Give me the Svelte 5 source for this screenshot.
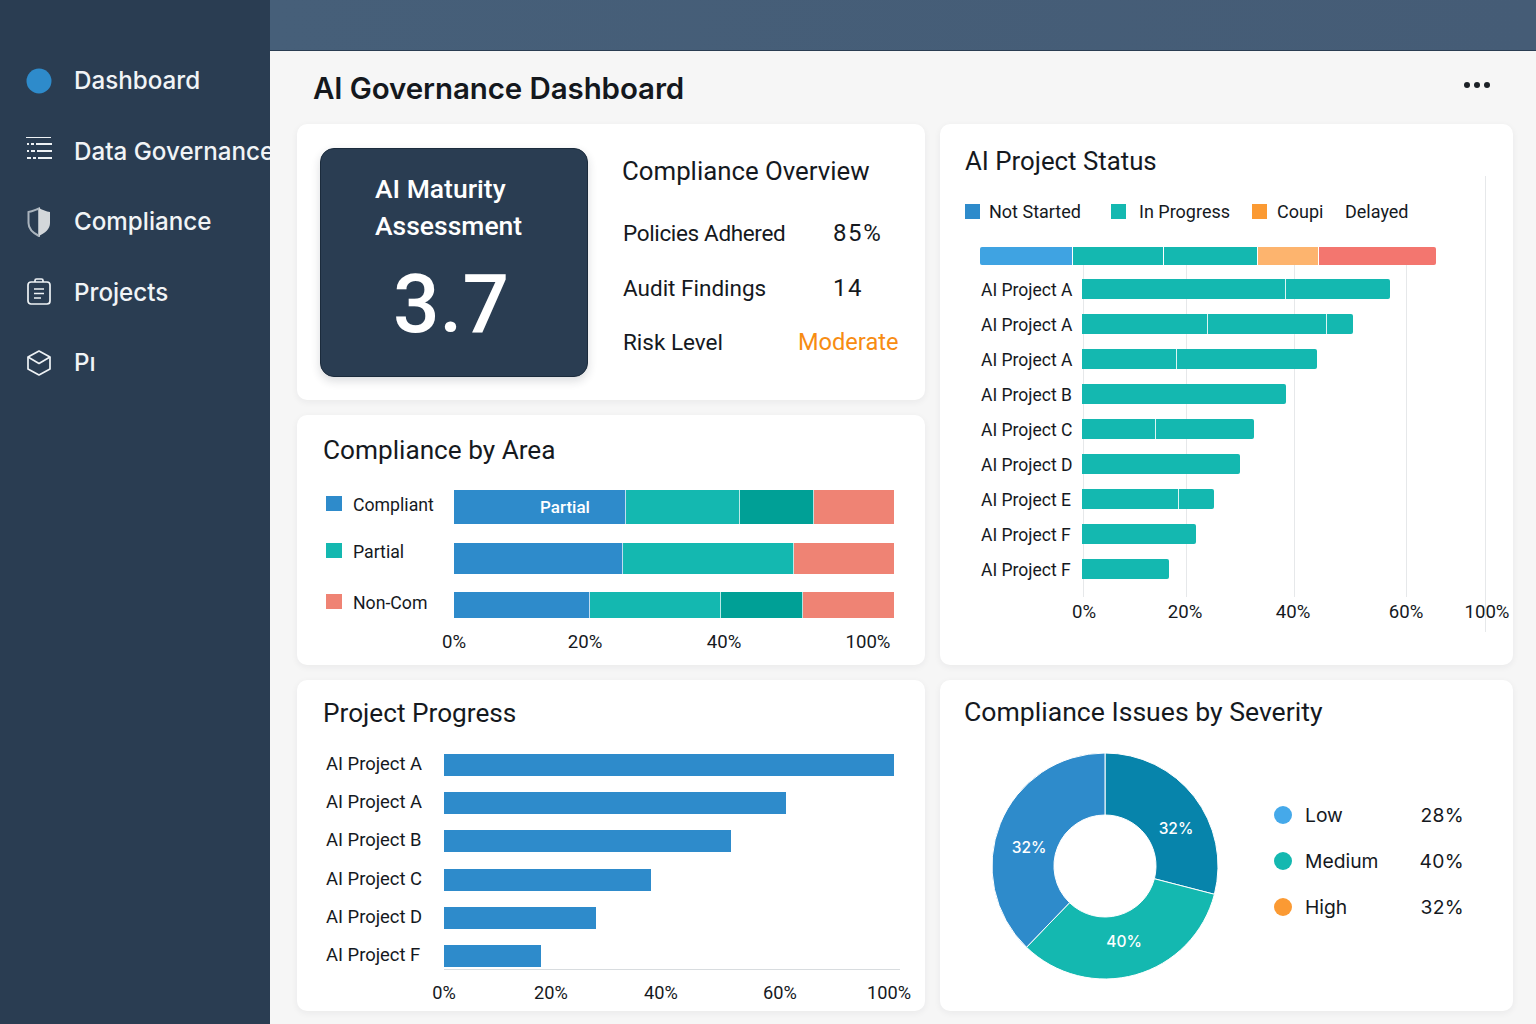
<script>
  const nav = ['Dashboard', 'Data Governance', 'Compliance', 'Projects'];

  const overview = [
    { label: 'Policies Adhered', value: '85%', tight: -0.35 },
    { label: 'Audit Findings', value: '14', tight: 0 }
  ];

  const areaLegend = [
    { name: 'Compliant', color: '#2e8bcb', h: 47 },
    { name: 'Partial', color: '#14b8b0', h: 51 },
    { name: 'Non-Com', color: '#ef8374', h: 25 }
  ];

  // widths in px, bar is 440 wide
  const areaBars = [
    { h: 34, gap: 0, segs: [[172, '#2e8bcb', 'Partial'], [114, '#14b8b0'], [74, '#00a096'], [80, '#ef8374']] },
    { h: 31, gap: 19, segs: [[169, '#2e8bcb'], [171, '#14b8b0'], [100, '#ef8374']] },
    { h: 26, gap: 18, segs: [[136, '#2e8bcb'], [131, '#14b8b0'], [82, '#00a096'], [91, '#ef8374']] }
  ];
  const areaTicks = [['0%', 0], ['20%', 131], ['40%', 270], ['100%', 414]];

  const statusLegend = [
    { name: 'Not Started', color: '#2e8bcb', gap: 9, w: 122 },
    { name: 'In Progress', color: '#14b8b0', gap: 13, w: 113 },
    { name: 'Coupi', color: '#fb9a33', gap: 10, w: 68 },
    { name: 'Delayed' }
  ];
  const statusTop = [[93, '#3fa3e2'], [91, '#14b8b0'], [94, '#14b8b0'], [61, '#fdb46e'], [117, '#f3766f']];
  const statusRows = [
    { name: 'AI Project A', end: 308, splits: [203] },
    { name: 'AI Project A', end: 271, splits: [125, 244] },
    { name: 'AI Project A', end: 235, splits: [94] },
    { name: 'AI Project B', end: 204, splits: [] },
    { name: 'AI Project C', end: 172, splits: [73] },
    { name: 'AI Project D', end: 158, splits: [] },
    { name: 'AI Project E', end: 132, splits: [96] },
    { name: 'AI Project F', end: 114, splits: [] },
    { name: 'AI Project F', end: 87, splits: [] }
  ];
  const statusGrid = [
    { x: 143, top: 141, h: 332 },
    { x: 246, top: 141, h: 332 },
    { x: 354, top: 141, h: 332 },
    { x: 466, top: 141, h: 332 },
    { x: 545, top: 52, h: 456 }
  ];
  const statusTicks = [['0%', 2], ['20%', 103], ['40%', 211], ['60%', 324], ['100%', 405]];

  const progress = [
    { name: 'AI Project A', w: 450 },
    { name: 'AI Project A', w: 342 },
    { name: 'AI Project B', w: 287 },
    { name: 'AI Project C', w: 207 },
    { name: 'AI Project D', w: 152 },
    { name: 'AI Project F', w: 97 }
  ];
  const progressTicks = [['0%', 0], ['20%', 107], ['40%', 217], ['60%', 336], ['100%', 445]];

  const severity = [
    { name: 'Low', pct: '28%', color: '#45a9ea' },
    { name: 'Medium', pct: '40%', color: '#14b8b0' },
    { name: 'High', pct: '32%', color: '#fb9a33' }
  ];

  function slice(a0, a1, R = 113, r = 51) {
    const p = (rad, a) => {
      const t = (a * Math.PI) / 180;
      return `${(rad * Math.sin(t)).toFixed(2)} ${(-rad * Math.cos(t)).toFixed(2)}`;
    };
    const large = a1 - a0 > 180 ? 1 : 0;
    return `M${p(R, a0)}A${R} ${R} 0 ${large} 1 ${p(R, a1)}L${p(r, a1)}A${r} ${r} 0 ${large} 0 ${p(r, a0)}Z`;
  }
  const donut = [
    { d: slice(0, 104.5), color: '#0784ab', label: '32%', x: 71, y: -38 },
    { d: slice(104.5, 224), color: '#14b8b0', label: '40%', x: 19, y: 75 },
    { d: slice(224, 360), color: '#2e8bcb', label: '32%', x: -76, y: -19 }
  ];
</script>

<div class="page">
  <aside class="sidebar">
    {#each nav as item, i}
      <div class="nav-item">
        <span class="nav-icon">
          {#if i === 0}
            <svg width="28" height="28" viewBox="0 0 28 28"><circle cx="14" cy="14" r="12.5" fill="#2e8bcb" /></svg>
          {:else if i === 1}
            <svg width="28" height="28" viewBox="0 0 28 28" fill="none" stroke="#eef2f5">
              <path d="M1 0.5h25" stroke-width="1" />
              <path d="M2 7h2M6 7h3M11 7h16M2 14h2M6 14h4M12 14h15M2 21h4M8 21h3M13 21h14" stroke-width="2" />
            </svg>
          {:else if i === 2}
            <svg width="28" height="30" viewBox="0 0 28 30">
              <path d="M14 1.5C10 3 7 4.500 3.500 5v11c0 6 4.500 10 10.500 13V1.500Z" fill="none" stroke="#aab4bd" stroke-width="2" />
              <path d="M14 1C18 3 21 4.500 25 5v11c0 6-5 10-11 13Z" fill="#d3d7da" />
            </svg>
          {:else}
            <svg width="28" height="30" viewBox="0 0 28 30" fill="none" stroke="#eef2f5" stroke-width="1.700">
              <rect x="3" y="5" width="22" height="22" rx="3" />
              <path d="M10 5V3.500q0-1.500 1.500-1.500h5q1.500 0 1.500 1.500V5" />
              <path d="M9 12h10M9 16.500h10M9 21h7" />
            </svg>
          {/if}
        </span>
        <span class="nav-label">{item}</span>
      </div>
    {/each}
    <div class="nav-item">
      <span class="nav-icon">
        <svg width="28" height="28" viewBox="0 0 28 28" fill="none" stroke="#eef2f5" stroke-width="1.700" stroke-linejoin="round">
          <path d="M14 2 25 8v12L14 26 3 20V8Z" />
          <path d="M3 8 14 14.500 25 8" />
        </svg>
      </span>
      <span class="nav-label">Pı</span>
    </div>
  </aside>

  <div class="content">
    <div class="topbar"></div>
    <main class="main">
      <header class="head">
        <h1>AI Governance Dashboard</h1>
        <div class="dots"><i></i><i></i><i></i></div>
      </header>

      <div class="grid">
        <div class="col">
          <section class="card summary">
            <div class="maturity">
              <div class="maturity-title">AI Maturity<br />Assessment</div>
              <div class="maturity-score">3.7</div>
            </div>
            <div class="overview">
              <h2>Compliance Overview</h2>
              {#each overview as row}
                <div class="ov-row"><span class="ov-label" style="letter-spacing: {row.tight}px">{row.label}</span><span class="ov-val">{row.value}</span></div>
              {/each}
              <div class="ov-row"><span class="ov-label">Risk Level</span><span class="ov-risk">Moderate</span></div>
            </div>
          </section>

          <section class="card area">
            <h2>Compliance by Area</h2>
            <div class="area-body">
              <div class="area-legend">
                {#each areaLegend as l}
                  <div class="area-key" style="height: {l.h}px">
                    <span class="sq" style="background: {l.color}"></span>{l.name}
                  </div>
                {/each}
              </div>
              <div class="area-bars">
                {#each areaBars as bar}
                  <div class="area-bar" style="height: {bar.h}px; margin-top: {bar.gap}px">
                    {#each bar.segs as s}
                      <span class="seg" style="width: {s[0]}px; background: {s[1]}">{s[2] ?? ''}</span>
                    {/each}
                  </div>
                {/each}
              </div>
            </div>
            <div class="ticks area-ticks">
              {#each areaTicks as t}<span style="left: {t[1]}px">{t[0]}</span>{/each}
            </div>
          </section>

          <section class="card progress">
            <h2>Project Progress</h2>
            <div class="prog-rows">
              {#each progress as p}
                <div class="prog-row">
                  <span class="prog-name">{p.name}</span>
                  <span class="prog-bar" style="width: {p.w}px"></span>
                </div>
              {/each}
            </div>
            <div class="prog-axis"></div>
            <div class="ticks prog-ticks">
              {#each progressTicks as t}<span style="left: {t[1]}px">{t[0]}</span>{/each}
            </div>
          </section>
        </div>

        <div class="col">
          <section class="card status">
            {#each statusGrid as g}
              <span class="gridline" style="left: {g.x}px; top: {g.top}px; height: {g.h}px"></span>
            {/each}
            <h2>AI Project Status</h2>
            <div class="status-legend">
              {#each statusLegend as l}
                {#if l.color}<span class="sq small" style="background: {l.color}; margin-right: {l.gap}px"></span>{/if}
                <span class="lg" style="width: {l.w ? l.w + 'px' : 'auto'}">{l.name}</span>
              {/each}
            </div>
            <div class="status-top">
              {#each statusTop as s}<span class="top-seg" style="width: {s[0]}px; background: {s[1]}"></span>{/each}
            </div>
            <div class="status-rows">
              {#each statusRows as r}
                <div class="status-row">
                  <span class="status-name">{r.name}</span>
                  <span class="status-bar" style="width: {r.end}px">
                    {#each r.splits as x}<i style="left: {x}px"></i>{/each}
                  </span>
                </div>
              {/each}
            </div>
            <div class="ticks status-ticks">
              {#each statusTicks as t}<span style="left: {t[1]}px">{t[0]}</span>{/each}
            </div>
          </section>

          <section class="card issues">
            <h2>Compliance Issues by Severity</h2>
            <div class="issues-body">
              <svg class="donut" width="230" height="230" viewBox="-115 -115 230 230">
                {#each donut as d}
                  <path d={d.d} fill={d.color} stroke="#fff" stroke-width="1" />
                {/each}
                {#each donut as d}
                  <text x={d.x} y={d.y} text-anchor="middle" dominant-baseline="central">{d.label}</text>
                {/each}
              </svg>
              <div class="sev">
                {#each severity as s}
                  <div class="sev-row">
                    <span class="dot" style="background: {s.color}"></span>
                    <span class="sev-name">{s.name}</span>
                    <span class="sev-pct">{s.pct}</span>
                  </div>
                {/each}
              </div>
            </div>
          </section>
        </div>
      </div>
    </main>
  </div>
</div>

<style>
  :global(body) {
    margin: 0;
    background: #f6f6f6;
  }

  .page {
    display: flex;
    width: 1536px;
    height: 1024px;
    overflow: hidden;
    font-family: Roboto, "Liberation Sans", sans-serif;
    color: #15191e;
  }

  /* Sidebar */
  .sidebar {
    flex: 0 0 270px;
    box-sizing: border-box;
    padding-top: 45.5px;
    background: #2a3d52;
    overflow: hidden;
  }
  .nav-item {
    display: flex;
    align-items: center;
    height: 70.5px;
    padding-left: 25px;
    white-space: nowrap;
  }
  .nav-icon {
    display: flex;
    align-items: center;
    justify-content: center;
    flex: 0 0 28px;
    margin-right: 21px;
  }
  .nav-label {
    font-family: Inter, sans-serif;
    font-size: 24.2px;
    font-weight: 500;
    color: #f1f4f6;
  }

  /* Main area */
  .content {
    flex: 1;
    min-width: 0;
    display: flex;
    flex-direction: column;
  }
  .topbar {
    flex: 0 0 50px;
    background: linear-gradient(90deg, #465f79, #455c76);
    border-bottom: 1px solid #2a3d52;
  }
  .main {
    flex: 1;
    padding: 0 23px 0 27px;
  }
  .head {
    display: flex;
    align-items: center;
    justify-content: space-between;
    height: 73px;
    padding: 0 23px 0 16px;
  }
  h1 {
    margin: 0;
    font-family: Inter, sans-serif;
    font-size: 29.5px;
    font-weight: 600;
    letter-spacing: -0.1px;
    color: #14181d;
  }
  .dots {
    display: flex;
    gap: 4px;
    margin-bottom: 6px;
  }
  .dots i {
    width: 6px;
    height: 6px;
    border-radius: 50%;
    background: #1c2126;
  }

  .grid {
    display: grid;
    grid-template-columns: 628px 573px;
    gap: 15px;
  }
  .col {
    display: flex;
    flex-direction: column;
    gap: 15px;
  }
  .card {
    position: relative;
    box-sizing: border-box;
    background: #fff;
    border-radius: 10px;
    box-shadow: 0 2px 7px rgba(30, 40, 50, 0.06);
  }
  h2 {
    margin: 0;
    font-size: 26.2px;
    font-weight: 400;
    line-height: 32px;
    color: #15191e;
  }

  /* Summary card */
  .summary {
    display: flex;
    height: 276px;
    padding: 24px 0 0 23px;
  }
  .maturity {
    flex: none;
    box-sizing: border-box;
    width: 268px;
    height: 229px;
    padding: 21px 0 0 54px;
    border-radius: 14px;
    background: #2a3d52;
    border: 1px solid #1b2b3c;
    box-shadow: 0 4px 10px rgba(30, 40, 50, 0.16);
    color: #fff;
  }
  .maturity-title {
    font-size: 26.5px;
    font-weight: 500;
    line-height: 37px;
  }
  .maturity-score {
    margin: 12px 0 0 18px;
    font-size: 82px;
    line-height: 96px;
    font-weight: 500;
  }
  .overview {
    flex: 1;
    padding: 7px 0 0 34px;
  }
  .overview h2 {
    margin-bottom: 19px;
    font-size: 25.8px;
  }
  .ov-row {
    display: flex;
    align-items: center;
    height: 54.5px;
    font-size: 24px;
  }
  .ov-label {
    flex: 0 0 210px;
    margin-left: 1px;
    font-size: 22.5px;
  }
  .ov-val {
    letter-spacing: 1.6px;
  }
  .ov-risk {
    margin-left: -35px;
    font-size: 23.6px;
    color: #f78c12;
  }

  /* Compliance by area */
  .area {
    height: 250px;
    padding: 19px 0 0 26px;
  }
  .area-body {
    display: flex;
    margin-top: 24px;
  }
  .area-legend {
    flex: 0 0 131px;
    margin-top: 5px;
  }
  .area-key {
    display: flex;
    align-items: flex-start;
    font-size: 17.7px;
    line-height: 20px;
    margin-left: 3px;
  }
  .sq {
    flex: none;
    width: 16px;
    height: 15px;
    margin: 1px 11px 0 0;
  }
  .area-bars {
    width: 440px;
  }
  .area-bar {
    display: flex;
  }
  .seg {
    box-sizing: border-box;
    display: flex;
    align-items: center;
    justify-content: center;
    padding-left: 51px;
    border-right: 1px solid rgba(255, 255, 255, 0.7);
    font-size: 17px;
    font-weight: 500;
    color: #fff;
  }
  .seg:last-child {
    border-right: 0;
  }

  .ticks {
    position: relative;
    height: 20px;
    font-size: 18.6px;
    line-height: 20px;
  }
  .ticks span {
    position: absolute;
    top: 0;
    transform: translateX(-50%);
    white-space: nowrap;
  }
  .area-ticks {
    margin: 14px 0 0 131px;
  }

  /* Project progress */
  .progress {
    height: 331px;
    padding: 17px 0 0 26px;
  }
  .prog-rows {
    margin-top: 17px;
  }
  .prog-row {
    display: flex;
    align-items: center;
    height: 38.2px;
  }
  .prog-name {
    flex: 0 0 118px;
    margin-left: 3px;
    padding-bottom: 3px;
    font-size: 18.4px;
  }
  .prog-bar {
    height: 22px;
    background: #2e8bcb;
  }
  .prog-axis {
    width: 456px;
    height: 1px;
    margin: -6px 0 0 121px;
    background: #d8dcdf;
  }
  .prog-ticks {
    margin: 13px 0 0 121px;
    font-size: 18.2px;
  }

  /* Project status */
  .status {
    height: 541px;
    padding: 21px 0 0 25px;
  }
  .status h2 {
    font-size: 25.8px;
  }
  .gridline {
    position: absolute;
    width: 1px;
    background: #e6e8ea;
  }
  .status-legend {
    position: relative;
    display: flex;
    align-items: center;
    height: 20px;
    margin-top: 24px;
    font-size: 18px;
  }
  .sq.small {
    width: 15px;
    height: 15px;
    margin-top: 0;
  }
  .lg {
    flex: none;
    white-space: nowrap;
  }
  .status-top {
    position: relative;
    display: flex;
    width: 456px;
    height: 18px;
    margin: 26px 0 0 15px;
  }
  .top-seg {
    box-sizing: border-box;
    border-right: 1px solid #fff;
  }
  .top-seg:first-child {
    border-radius: 2px 0 0 2px;
  }
  .top-seg:last-child {
    border-radius: 0 2px 2px 0;
    border-right: 0;
  }
  .status-rows {
    position: relative;
    margin-top: 6px;
  }
  .status-row {
    display: flex;
    align-items: center;
    height: 35px;
  }
  .status-name {
    flex: 0 0 101px;
    margin-left: 16px;
    padding-top: 3px;
    font-size: 17.5px;
  }
  .status-bar {
    position: relative;
    height: 20px;
    border-radius: 0 2px 2px 0;
    background: #14b8b0;
  }
  .status-bar i {
    position: absolute;
    top: 0;
    bottom: 0;
    width: 1px;
    background: rgba(255, 255, 255, 0.85);
  }
  .status-ticks {
    margin: 16px 0 0 117px;
  }

  /* Issues */
  .issues {
    height: 331px;
    padding: 16px 0 0 24px;
  }
  .issues h2 {
    font-size: 26.6px;
  }
  .issues-body {
    display: flex;
    align-items: flex-start;
    margin-top: 23px;
  }
  .donut {
    flex: none;
    margin-left: 26px;
  }
  .donut text {
    font-family: Inter, sans-serif;
    font-size: 15.5px;
    font-weight: 500;
    fill: #fff;
  }
  .sev {
    flex: 1;
    margin: 41px 0 0 54px;
    padding-right: 49px;
  }
  .sev-row {
    display: flex;
    align-items: center;
    height: 46px;
    font-family: Inter, sans-serif;
    font-size: 19.3px;
    color: #15191e;
  }
  .dot {
    flex: none;
    width: 18px;
    height: 18px;
    border-radius: 50%;
    margin-right: 13px;
  }
  .sev-name {
    flex: 1;
  }
  .sev-pct {
    letter-spacing: 0.3px;
  }
</style>
